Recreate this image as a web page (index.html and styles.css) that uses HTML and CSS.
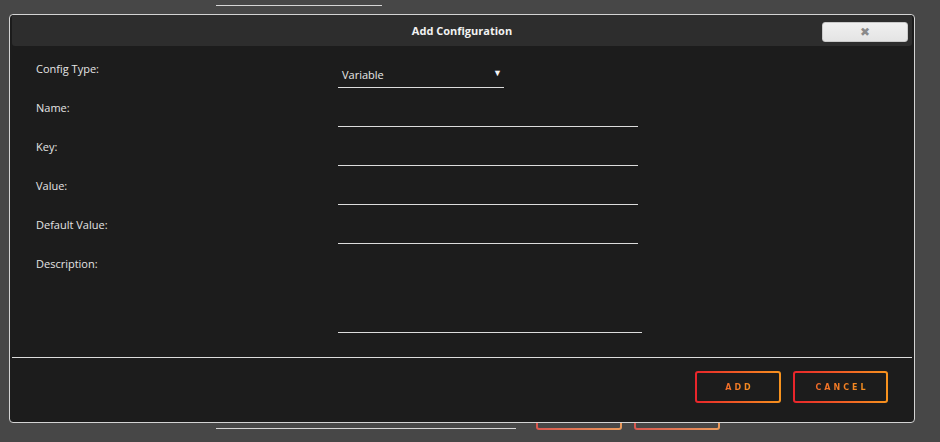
FILE: index.html
```html
<!DOCTYPE html>
<html lang="en">
<head>
    <meta charset="UTF-8">
    <meta name="viewport" content="width=device-width, initial-scale=1.0">
    <title>Add Configuration</title>
    <link rel="stylesheet" href="styles.css">
</head>
<body>
    <!-- page behind the modal -->
    <div class="page">
        <div class="page-line top-line"></div>
        <div class="page-bottom">
            <div class="page-line bottom-line"></div>
            <div class="page-button"></div>
            <div class="page-button"></div>
        </div>
    </div>

    <div class="dialog">
        <div class="titlebar">
            <span class="title">Add Configuration</span>
            <button class="close-button">&#10006;</button>
        </div>

        <div class="form">
            <label class="label">Config Type:</label>
            <div class="select">
                <span>Variable</span>
                <span class="arrow">&#9660;</span>
            </div>

            <label class="label">Name:</label>
            <input class="field" type="text">

            <label class="label">Key:</label>
            <input class="field" type="text">

            <label class="label">Value:</label>
            <input class="field" type="text">

            <label class="label">Default Value:</label>
            <input class="field" type="text">

            <label class="label">Description:</label>
            <textarea class="field description"></textarea>
        </div>

        <div class="footer">
            <button class="grad-button add-button"><span>ADD</span></button>
            <button class="grad-button cancel-button"><span>CANCEL</span></button>
        </div>
    </div>
</body>
</html>
```

FILE: styles.css
```css
body{
    margin: 0;
    background-color: #474747;
    font-family: "Open Sans", "Noto Sans", sans-serif;
    height: 442px;
    overflow: hidden;
}
.page{
    position: relative;
    height: 442px;
    display: flex;
    flex-direction: column;
    justify-content: space-between;
}
.page-line{
    height: 1px;
    background-color: #d6d6d6;
}
.top-line{
    width: 166px;
    margin: 5px 0 0 216px;
}
.page-bottom{
    display: flex;
    align-items: flex-end;
    gap: 12px;
    margin: 0 0 12px 216px;
}
.bottom-line{
    width: 300px;
    margin-bottom: 1px;
    margin-right: 8px;
}
.page-button{
    width: 86px;
    height: 20px;
    box-sizing: border-box;
    border: 2px solid transparent;
    border-top: none;
    border-radius: 0 0 3px 3px;
    background: linear-gradient(#474747, #474747) padding-box,
                linear-gradient(90deg, #d9574f, #e99a5c) border-box;
}

.dialog{
    position: absolute;
    left: 9px;
    top: 14px;
    width: 904px;
    height: 407px;
    border: 1px solid #d4d4d4;
    border-radius: 4px;
    background-color: #1c1c1c;
    display: flex;
    flex-direction: column;
}
.titlebar{
    margin: 0 2px;
    height: 31px;
    background-color: #2d2d2d;
    border-radius: 0 0 3px 3px;
    display: flex;
    align-items: center;
    justify-content: center;
    position: relative;
}
.title{
    color: #f2f2f2;
    font-size: 11px;
    font-weight: bold;
}
.close-button{
    position: absolute;
    right: 4px;
    top: 7px;
    width: 86px;
    height: 20px;
    border: 1px solid #c9c9c9;
    border-radius: 3px;
    background: linear-gradient(#f0f0f0, #e4e4e4);
    color: #8a8a8a;
    font-family: "DejaVu Sans", sans-serif;
    font-size: 12px;
    font-weight: bold;
    line-height: 18px;
    padding: 0;
}

.form{
    display: grid;
    grid-template-columns: 302px auto;
    row-gap: 11px;
    padding: 14px 0 0 26px;
    justify-items: start;
}
.label{
    color: #e4e4e4;
    font-size: 11px;
    line-height: 17px;
}
.select{
    width: 166px;
    height: 28px;
    border-bottom: 1px solid #dcdcdc;
    box-sizing: border-box;
    display: flex;
    align-items: center;
    justify-content: space-between;
    padding: 1px 2px 0 4px;
    color: #e8e8e8;
    font-size: 11px;
}
.arrow{
    font-size: 9px;
    color: #f4f4f4;
    margin-top: -3px;
}
.field{
    width: 300px;
    height: 28px;
    box-sizing: border-box;
    border: none;
    border-bottom: 1px solid #dcdcdc;
    background: transparent;
    color: #e8e8e8;
    padding: 0;
    margin: 0;
    font-family: "Open Sans", sans-serif;
}
.description{
    width: 304px;
    height: 78px;
    resize: none;
    display: block;
}

.footer{
    margin: 24px 2px 0 2px;
    border-top: 1px solid #dcdcdc;
    display: flex;
    justify-content: flex-end;
    gap: 12px;
    padding: 13px 24px 0 0;
}
.grad-button{
    height: 32px;
    border: 2px solid transparent;
    border-radius: 3px;
    background: linear-gradient(#1c1c1c, #1c1c1c) padding-box,
                linear-gradient(90deg, #e8242b, #f7931e) border-box;
    font-family: "DejaVu Sans", sans-serif;
    font-size: 8px;
    font-weight: bold;
    letter-spacing: 3px;
    padding: 0 0 0 3px;
    cursor: pointer;
}
.grad-button span{
    background: linear-gradient(90deg, #f06a2a, #f7931e);
    -webkit-background-clip: text;
    background-clip: text;
    color: transparent;
}
.add-button{
    width: 86px;
}
.cancel-button{
    width: 95px;
}
```
